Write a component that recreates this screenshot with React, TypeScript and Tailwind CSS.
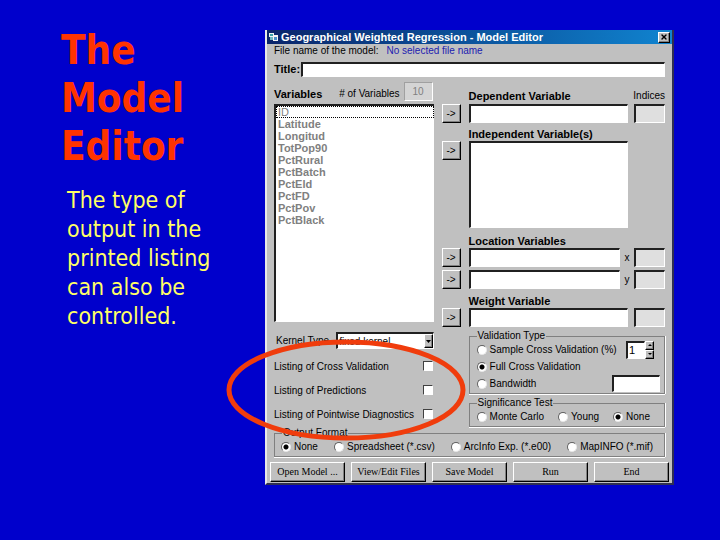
import { useState } from "react";
import type { ReactNode } from "react";
import { X } from "lucide-react";

const variables = [
  "ID",
  "Latitude",
  "Longitud",
  "TotPop90",
  "PctRural",
  "PctBatch",
  "PctEld",
  "PctFD",
  "PctPov",
  "PctBlack",
];

const listings = ["Listing of Cross Validation", "Listing of Predictions", "Listing of Pointwise Diagnostics"];

const actions = ["Open Model ...", "View/Edit Files", "Save Model", "Run", "End"];

const sunken =
  "min-w-0 border border-t-2 border-l-2 border-t-[#202020] border-l-[#202020] border-b-white border-r-white rounded-none outline-none px-1";

const raised =
  "bg-[#c0c0c0] border border-t-white border-l-white border-b-black border-r-black shadow-[inset_-1px_-1px_0_#808080]";

function ArrowButton({ label }: { label: string }) {
  return (
    <button aria-label={label} className={`${raised} w-[19px] h-[19px] shrink-0 text-[10px] leading-none`}>
      -&gt;
    </button>
  );
}

function VariableRow({ name, axis }: { name: string; axis?: string }) {
  return (
    <div className="flex items-center h-[19px]">
      <ArrowButton label={`Assign ${name}`} />
      <input aria-label={name} className={`${sunken} ml-2 flex-1 h-[19px] bg-white`} />
      <span className={axis ? "w-[14px] text-center" : "w-[6px]"}>{axis}</span>
      <input aria-label={`${name} index`} disabled className={`${sunken} w-[31px] h-[19px] bg-[#dfdfdf]`} />
    </div>
  );
}

function Heading({ children }: { children: ReactNode }) {
  return <h3 className="ml-[27px] text-[11px] leading-[14px] font-bold">{children}</h3>;
}

function Group({ title, className, children }: { title: string; className: string; children: ReactNode }) {
  return (
    <fieldset className={`min-w-0 border border-[#808080] shadow-[0_1px_0_#ffffff,1px_0_0_#ffffff] pb-px ${className}`}>
      <legend className="ml-[7px] px-px leading-[10px]">{title}</legend>
      {children}
    </fieldset>
  );
}

function Radio({ group, label, checked }: { group: string; label: string; checked?: boolean }) {
  return (
    <label className="flex items-center gap-[3px] whitespace-nowrap">
      <input
        type="radio"
        name={group}
        defaultChecked={checked}
        className="appearance-none w-[10px] h-[10px] shrink-0 rounded-full bg-white border border-t-[#606060] border-l-[#606060] border-b-[#e8e8e8] border-r-[#e8e8e8] checked:bg-[radial-gradient(circle,#000_0_2px,#fff_3px)]"
      />
      {label}
    </label>
  );
}

function VariablePanel() {
  return (
    <div className="flex-[4] min-w-0">
      <div className="flex items-end h-[19px] mb-[3px]">
        <label htmlFor="variables" className="flex-1 text-[11px] font-bold leading-[14px]">
          Variables
        </label>
        <label htmlFor="count" className="mr-1 leading-[14px]">
          # of Variables
        </label>
        <input
          id="count"
          disabled
          defaultValue="10"
          className="w-[29px] h-[19px] mr-px border border-[#a0a0a0] border-b-white border-r-white bg-[#d4d4d4] text-center text-[#808080]"
        />
      </div>
      <select
        id="variables"
        multiple
        className="block w-full h-[218px] appearance-none overflow-hidden rounded-none bg-white p-0 border-2 border-t-[#202020] border-l-[#202020] border-b border-r-0 border-b-white outline-none text-[11px] text-[#808080]"
      >
        {variables.map((name, i) => (
          <option
            key={name}
            className={
              i === 0
                ? "h-3 min-h-0 p-0 pl-[2px] text-[11px] leading-3 outline-1 outline-dotted outline-black -outline-offset-1"
                : "h-3 min-h-0 p-0 pl-[2px] text-[11px] leading-3 font-bold"
            }
          >
            {name}
          </option>
        ))}
      </select>
      <div className="flex items-center h-[17px] mt-[10px]">
        <label htmlFor="kernel" className="flex-1 pl-[2px]">
          Kernel Type
        </label>
        <div className="relative w-[61%]">
          <select
            id="kernel"
            className="block w-full h-[17px] appearance-none rounded-none bg-white text-[10px] leading-[13px] p-0 pl-px border border-t-2 border-l-2 border-t-[#202020] border-l-[#202020] border-b-white border-r-white"
          >
            <option>fixed kernel</option>
          </select>
          <span
            className={`${raised} pointer-events-none absolute right-px top-[2px] w-[9px] h-[14px] flex items-center justify-center`}
          >
            <svg viewBox="0 0 5 3" className="w-[5px] h-[3px]">
              <path d="M0 0h5L2.500 3z" />
            </svg>
          </span>
        </div>
      </div>
      <div className="mt-[5px]">
        {listings.map((name) => (
          <label key={name} className="flex items-center justify-between h-6 pr-px whitespace-nowrap">
            {name}
            <input
              type="checkbox"
              className="appearance-none w-[10px] h-[10px] bg-white border border-t-[#404040] border-l-[#404040] border-b-white border-r-white checked:bg-black"
            />
          </label>
        ))}
      </div>
    </div>
  );
}

function Spinner() {
  const [value, setValue] = useState(1);
  return (
    <div className="flex h-[18px]">
      <input
        aria-label="Sample percentage"
        value={value}
        onChange={(e) => setValue(Number(e.target.value) || 0)}
        className="w-[19px] h-[18px] bg-white pl-px border border-t-2 border-l-2 border-t-[#202020] border-l-[#202020] border-b-white border-r-white text-[11px]"
      />
      <div className="flex flex-col w-[9px]">
        <button aria-label="Increase" onClick={() => setValue(value + 1)} className={`${raised} flex-1 flex items-center justify-center`}>
          <svg viewBox="0 0 4 2" className="w-1 h-[2px]">
            <path d="M0 2h4L2 0z" />
          </svg>
        </button>
        <button aria-label="Decrease" onClick={() => setValue(value - 1)} className={`${raised} flex-1 flex items-center justify-center`}>
          <svg viewBox="0 0 4 2" className="w-1 h-[2px]">
            <path d="M0 0h4L2 2z" />
          </svg>
        </button>
      </div>
    </div>
  );
}

function ModelPanel() {
  return (
    <div className="flex-[5.6] min-w-0">
      <div className="flex items-end justify-between h-[22px] pb-px">
        <Heading>Dependent Variable</Heading>
        <span className="leading-[14px]">Indices</span>
      </div>
      <VariableRow name="Dependent variable" />
      <div className="mt-1">
        <Heading>Independent Variable(s)</Heading>
      </div>
      <div className="flex items-start gap-2">
        <ArrowButton label="Assign independent variables" />
        <textarea
          aria-label="Independent variables"
          className={`${sunken} flex-1 h-[87px] mr-[37px] bg-white resize-none`}
        />
      </div>
      <div className="mt-[6px]">
        <Heading>Location Variables</Heading>
      </div>
      <div className="flex flex-col gap-[3px]">
        <VariableRow name="Location x" axis="x" />
        <VariableRow name="Location y" axis="y" />
      </div>
      <div className="mt-[5px]">
        <Heading>Weight Variable</Heading>
      </div>
      <VariableRow name="Weight variable" />

      <div className="ml-[27px]">
        <Group title="Validation Type" className="mt-1">
          <div className="flex items-center justify-between h-[17px] pl-[7px] pr-[10px]">
            <Radio group="validation" label="Sample Cross Validation (%)" />
            <Spinner />
          </div>
          <div className="flex items-center h-[17px] pl-[7px]">
            <Radio group="validation" label="Full Cross Validation" checked />
          </div>
          <div className="flex items-center justify-between h-[17px] pl-[7px] pr-1">
            <Radio group="validation" label="Bandwidth" />
            <input aria-label="Bandwidth value" className={`${sunken} w-[48px] h-[17px] bg-white`} />
          </div>
        </Group>
        <Group title="Significance Test" className="mt-1">
          <div className="flex items-center justify-between h-[17px] pl-[7px] pr-[14px]">
            <Radio group="significance" label="Monte Carlo" />
            <Radio group="significance" label="Young" />
            <Radio group="significance" label="None" checked />
          </div>
        </Group>
      </div>
    </div>
  );
}

function ModelEditor() {
  return (
    <section className="relative bg-[#c0c0c0] border-l-2 border-l-[#e8e8e8] border-r-2 border-b-2 border-r-[#303050] border-b-[#303050] font-['Liberation_Sans',Arial,sans-serif] text-[10px] text-black">
      <header className="flex items-center h-[14px] pl-[2px] pr-[2px] bg-linear-to-r from-[#0a246a] to-[#1084d0] text-white">
        <svg viewBox="0 0 10 10" className="w-[10px] h-[10px] mr-[2px] shrink-0">
          <path d="M0 1h5v4H0z" fill="#e8f4f4" />
          <path d="M1 2h3v2H1z" fill="#38a0a8" />
          <path d="M1 5h3v3H1z" fill="#70b8c0" />
          <path d="M4 3h5v6H4z" fill="#f4f4f4" />
          <path d="M5 5h3v3H5z" fill="#4890c8" />
        </svg>
        <h2 className="flex-1 text-[11px] font-bold leading-[14px] whitespace-nowrap">
          Geographical Weighted Regression - Model Editor
        </h2>
        <button aria-label="Close" className={`${raised} w-3 h-[11px] flex items-center justify-center text-black`}>
          <X className="w-2 h-2" strokeWidth={4} />
        </button>
      </header>

      <div className="px-[7px]">
        <p className="flex gap-2 leading-[14px]">
          <span>File name of the model:</span>
          <span className="text-[#2020b0]">No selected file name</span>
        </p>
        <div className="flex items-center mt-1 h-[15px]">
          <label htmlFor="title" className="text-[11px] font-bold mr-px">
            Title:
          </label>
          <input id="title" className={`${sunken} flex-1 h-[15px] bg-white`} />
        </div>
        <div className="flex gap-2 mt-[5px]">
          <VariablePanel />
          <ModelPanel />
        </div>
        <Group title="Output Format" className="mt-px">
          <div className="flex items-center justify-between h-[17px] pl-[6px] pr-[11px]">
            <Radio group="output" label="None" checked />
            <Radio group="output" label="Spreadsheet (*.csv)" />
            <Radio group="output" label="ArcInfo Exp. (*.e00)" />
            <Radio group="output" label="MapINFO (*.mif)" />
          </div>
        </Group>
      </div>
      <div className="flex gap-[6px] mt-[5px] px-[3px] pb-px">
        {actions.map((name) => (
          <button
            key={name}
            className={`${raised} flex-1 h-[20px] font-['Liberation_Serif','Times_New_Roman',serif] text-[10px] leading-none whitespace-nowrap`}
          >
            {name}
          </button>
        ))}
      </div>

      {/* hand-drawn highlight around the listing options */}
      <svg
        viewBox="0 0 240 104"
        className="pointer-events-none absolute -left-[41px] top-[308px] w-[240px] h-[104px]"
        fill="none"
      >
        <ellipse cx="120" cy="52" rx="117" ry="48" stroke="#f03c0c" strokeWidth="5" />
      </svg>
    </section>
  );
}

export default function App() {
  return (
    <main className="flex min-h-screen items-start bg-[#0000cc] pt-[30px] pr-[46px]">
      <div className="w-[265px] shrink-0 pl-[61px] font-['DejaVu_Sans_Condensed','DejaVu_Sans',Tahoma,sans-serif]">
        <h1 className="-mt-1 w-[140px] text-[40px] leading-[48px] font-bold text-[#ff3300]">The Model Editor</h1>
        <p className="mt-4 ml-[6px] w-[160px] text-[23px] leading-[29px] text-[#ffff66]">
          The type of output in the printed listing can also be controlled.
        </p>
      </div>
      <div className="flex-1 min-w-0">
        <ModelEditor />
      </div>
    </main>
  );
}
